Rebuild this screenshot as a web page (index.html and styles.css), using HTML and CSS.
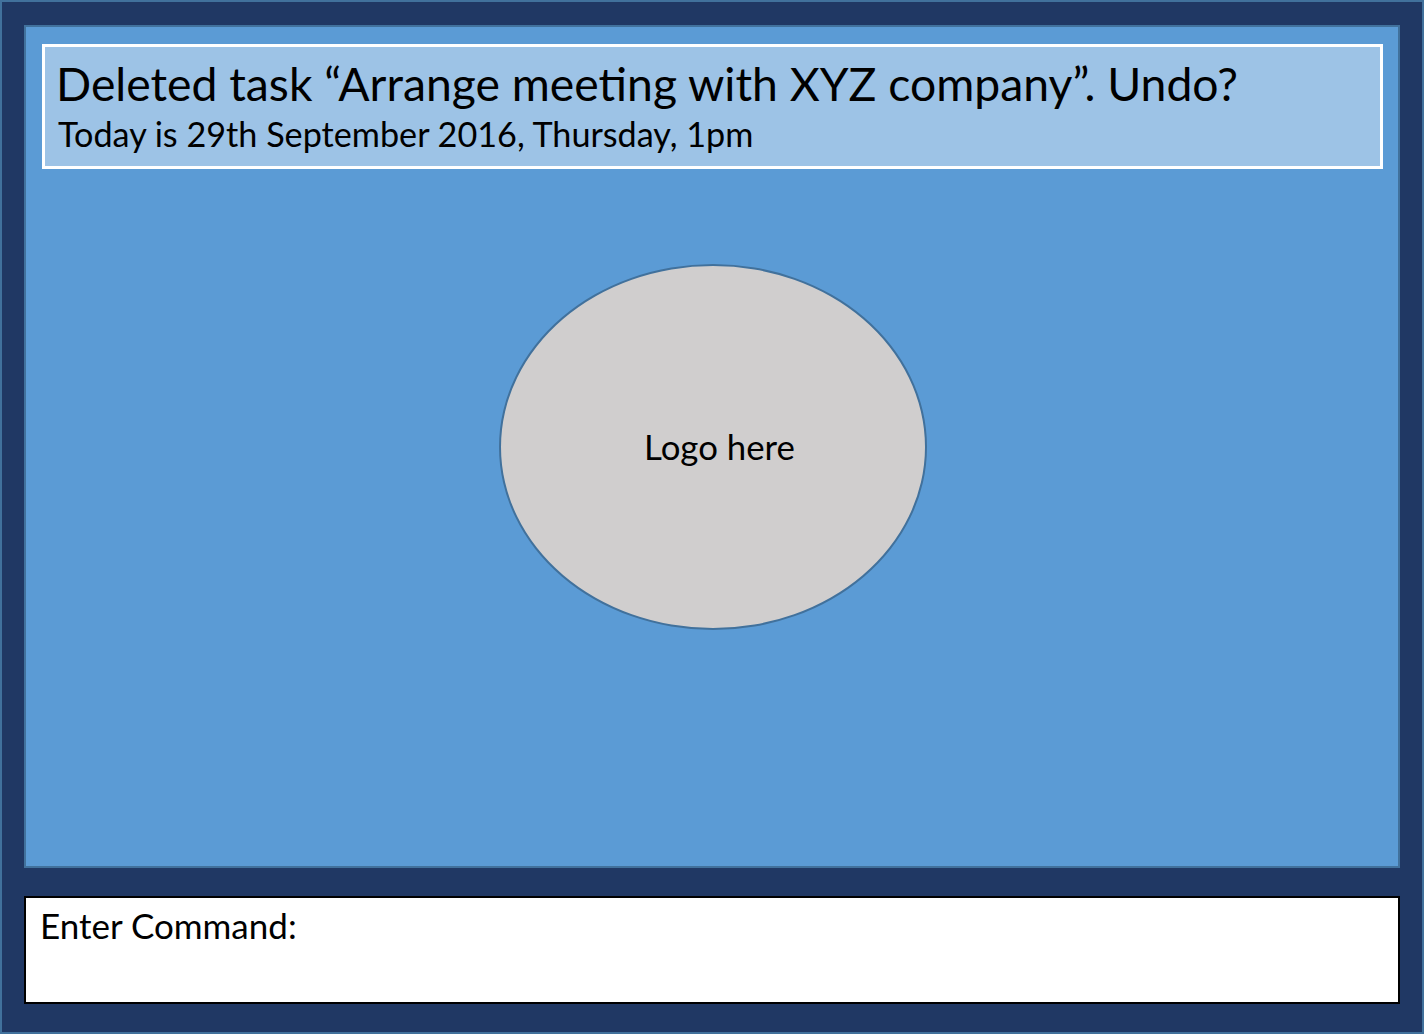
FILE: index.html
```html
<!DOCTYPE html>
<html lang="en">
<head>
<meta charset="utf-8">
<title>Task Manager</title>
<link rel="stylesheet" href="styles.css">
</head>
<body>
<div class="frame">
  <main class="panel">
    <header class="notice">
      <div class="notice-title">Deleted task “Arrange meeting with XYZ company”. Undo?</div>
      <div class="notice-date">Today is 29th September 2016, Thursday, 1pm</div>
    </header>
    <div class="logo">Logo here</div>
  </main>
  <div class="command">Enter Command:</div>
</div>
</body>
</html>
```

FILE: styles.css
```css
* { box-sizing: border-box; }
html, body { margin: 0; padding: 0; }
body {
  width: 1424px;
  height: 1034px;
  font-family: Lato, "Open Sans", sans-serif;
  color: #000;
}
.frame {
  width: 1424px;
  height: 1034px;
  background: #203864;
  border: 2px solid #41719c;
  padding: 23px 22px 28px 22px;
  display: flex;
  flex-direction: column;
  gap: 28px;
}
.panel {
  height: 843px;
  background: #5b9bd5;
  border: 2px solid #41719c;
  display: grid;
  grid-template: 1fr / 1fr;
  padding: 17px 15px 0 16px;
}
.notice {
  grid-area: 1 / 1;
  align-self: start;
  height: 125px;
  background: #9dc3e6;
  border: 3px solid #fff;
  padding: 9px 0 0 13px;
}
.notice-title {
  font-size: 46.3px;
  line-height: 54px;
  margin-left: -2px;
}
.notice-date {
  font-size: 34.2px;
  line-height: 48px;
}
.logo {
  grid-area: 1 / 1;
  align-self: center;
  justify-self: center;
  margin-top: -17px;
  width: 428px;
  height: 366px;
  border-radius: 50%;
  background: #d0cece;
  border: 2px solid #41719c;
  display: flex;
  align-items: center;
  justify-content: center;
  font-size: 34.8px;
  padding-left: 14px;
}
.command {
  height: 108px;
  background: #fff;
  border: 2px solid #000;
  padding: 7px 0 0 14px;
  font-size: 35px;
  line-height: 40px;
}
```
